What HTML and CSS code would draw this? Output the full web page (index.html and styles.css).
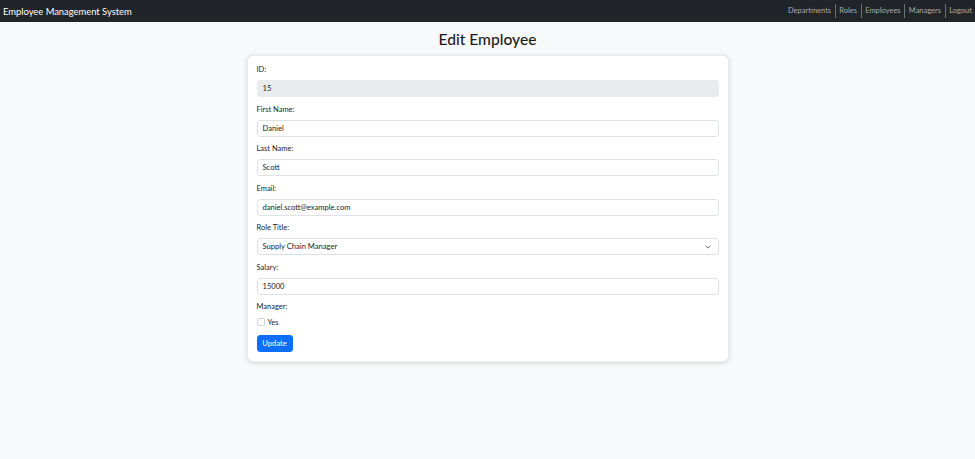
FILE: index.html
```html
<!DOCTYPE html>
<html>
<head>
<meta charset="utf-8">
<link rel="stylesheet" href="styles.css">
</head>
<body>
<nav class="navbar">
  <span class="brand">Employee Management System</span>
  <ul class="nav">
    <li>Departments</li>
    <li>Roles</li>
    <li>Employees</li>
    <li>Managers</li>
    <li>Logout</li>
  </ul>
</nav>
<main class="main">
  <h1 class="title">Edit Employee</h1>
  <form class="card">
    <div class="group">
      <label class="label">ID:</label>
      <div class="input readonly">15</div>
    </div>
    <div class="group">
      <label class="label">First Name:</label>
      <div class="input">Daniel</div>
    </div>
    <div class="group">
      <label class="label">Last Name:</label>
      <div class="input">Scott</div>
    </div>
    <div class="group">
      <label class="label">Email:</label>
      <div class="input">daniel.scott@example.com</div>
    </div>
    <div class="group">
      <label class="label">Role Title:</label>
      <div class="input select">
        <span>Supply Chain Manager</span>
        <svg class="chev" width="8" height="6" viewBox="0 0 16 16"><path d="M2 5l6 6 6-6" fill="none" stroke="#343a40" stroke-width="2" stroke-linecap="round" stroke-linejoin="round"/></svg>
      </div>
    </div>
    <div class="group">
      <label class="label">Salary:</label>
      <div class="input">15000</div>
    </div>
    <div class="group">
      <label class="label">Manager:</label>
      <div class="check"><span class="box"></span><span class="check-label">Yes</span></div>
    </div>
    <button type="button" class="btn">Update</button>
  </form>
</main>
</body>
</html>
```
FILE: styles.css
```css
* { box-sizing: border-box; }
body {
  margin: 0;
  background: #f8f9fa;
  font-family: Lato, "Noto Sans", sans-serif;
  color: #212529;
  width: 975px;
  height: 459px;
  overflow: hidden;
}
.navbar {
  height: 22px;
  background: #212529;
  display: flex;
  align-items: center;
  justify-content: space-between;
  padding: 0 3px 0 3px;
}
.brand {
  color: #fff;
  font-size: 9.4px;
}
.nav {
  list-style: none;
  margin: 0;
  padding: 0;
  display: flex;
  align-items: center;
}
.nav li {
  color: rgba(255,255,255,0.6);
  font-size: 7.5px;
  padding: 0 3.6px;
  border-left: 1px solid rgba(255,255,255,0.35);
  line-height: 14px;
}
.nav li:first-child { border-left: none; }
.nav li:last-child { padding-right: 0; }
.main {
  display: flex;
  flex-direction: column;
  align-items: center;
}
.title {
  margin: 7px 0 5px;
  font-size: 15.6px;
  font-weight: 500;
  line-height: 21px;
  color: #1a1d20;
}
.card {
  width: 482px;
  background: #fff;
  border: 1px solid rgba(0,0,0,0.08);
  border-radius: 6px;
  box-shadow: 0 1px 5px rgba(0,0,0,0.15);
  padding: 9px 9px 9px 9px;
}
.group { margin-bottom: 7.5px; }
.label {
  display: block;
  font-size: 7.5px;
  line-height: 10px;
  margin: 0 0 5px;
  color: #212529;
}
.input {
  height: 17px;
  border: 1px solid #dee2e6;
  border-radius: 3px;
  background: #fff;
  font-size: 7.6px;
  line-height: 15px;
  padding: 0 5px;
  color: #212529;
}
.input.readonly { background: #e9ecef; border-color: #e9ecef; }
.select {
  display: flex;
  align-items: center;
  justify-content: space-between;
}
.chev { margin-right: 1px; }
.check {
  display: flex;
  align-items: center;
  gap: 3px;
  height: 10px;
  margin-top: 0;
}
.box {
  width: 8px;
  height: 8px;
  border: 1px solid #ced4da;
  border-radius: 2px;
  background: #fff;
}
.check-label { font-size: 7.5px; }
.btn {
  display: block;
  margin-top: 5px;
  background: #0d6efd;
  color: #fff;
  border: 1px solid #0d6efd;
  border-radius: 3px;
  height: 17px;
  width: 36px;
  padding: 0;
  font-family: inherit;
  font-size: 7.6px;
}
```
